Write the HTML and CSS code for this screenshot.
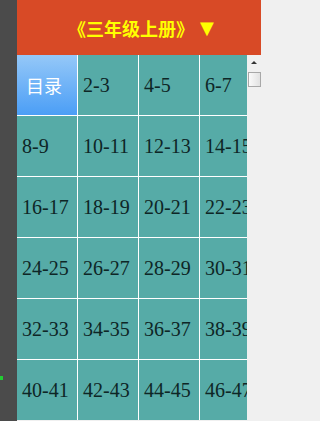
FILE: index.html
```html
<!DOCTYPE html>
<html>
<head>
<meta charset="utf-8">
<link rel="stylesheet" href="styles.css">
</head>
<body>
<div class="app">
  <div class="side"><span class="dot"></span></div>
  <div class="main">
    <div class="header"><span class="title">《三年级上册》</span><span class="arrow">▼</span></div>
    <div class="body">
      <div class="viewport">
        <div class="grid">
          <div class="cell toc">目录</div><div class="cell">2-3</div><div class="cell">4-5</div><div class="cell">6-7</div>
          <div class="cell">8-9</div><div class="cell">10-11</div><div class="cell">12-13</div><div class="cell">14-15</div>
          <div class="cell">16-17</div><div class="cell">18-19</div><div class="cell">20-21</div><div class="cell">22-23</div>
          <div class="cell">24-25</div><div class="cell">26-27</div><div class="cell">28-29</div><div class="cell">30-31</div>
          <div class="cell">32-33</div><div class="cell">34-35</div><div class="cell">36-37</div><div class="cell">38-39</div>
          <div class="cell">40-41</div><div class="cell">42-43</div><div class="cell">44-45</div><div class="cell">46-47</div>
        </div>
      </div>
      <div class="scrollbar">
        <div class="up"></div>
        <div class="thumb"></div>
      </div>
    </div>
  </div>
</div>
</body>
</html>
```
FILE: styles.css
```css
html, body {
  margin: 0;
  padding: 0;
  width: 261px;
  height: 421px;
  overflow: hidden;
  background: #f0f0f0;
}
.app {
  display: flex;
  width: 261px;
  height: 421px;
}
.side {
  width: 17px;
  flex: none;
  background: #4b4b4b;
  display: flex;
  flex-direction: column;
  justify-content: flex-end;
}
.dot {
  width: 3px;
  height: 4px;
  margin-bottom: 41px;
  background: #22cc33;
}
.main {
  flex: 1;
  display: flex;
  flex-direction: column;
  min-width: 0;
}
.header {
  height: 55px;
  flex: none;
  background: #d84a26;
  display: flex;
  align-items: center;
  justify-content: center;
  padding-left: 4px;
  color: #ffff00;
  font-family: "Noto Sans CJK SC", "Noto Sans", sans-serif;
  font-weight: bold;
  font-size: 18px;
  box-sizing: border-box;
}
.arrow {
  font-size: 18px;
  margin-left: 6px;
  font-family: "DejaVu Sans", sans-serif;
}
.body {
  flex: 1;
  display: flex;
  min-height: 0;
}
.viewport {
  width: 230px;
  flex: none;
  overflow: hidden;
}
.grid {
  display: grid;
  grid-template-columns: repeat(4, 60px);
  grid-auto-rows: 60px;
  gap: 1px;
  background: #ffffff;
  width: 243px;
}
.cell {
  background: #56aba7;
  color: #0e2626;
  font-family: "Liberation Serif", serif;
  font-size: 20px;
  display: flex;
  align-items: center;
  padding-left: 5px;
  white-space: nowrap;
  overflow: hidden;
}
.cell.toc {
  background: linear-gradient(#95c8f8, #4b9ef6);
  color: #ffffff;
  font-family: "Noto Sans CJK SC", sans-serif;
  font-size: 18px;
  padding-left: 9px;
}
.scrollbar {
  flex: 1;
  background: #f0f0f0;
  display: flex;
  flex-direction: column;
  align-items: center;
}
.up {
  width: 0;
  height: 0;
  margin-top: 6px;
  border-left: 3px solid transparent;
  border-right: 3px solid transparent;
  border-bottom: 3px solid #333333;
}
.thumb {
  margin-top: 8px;
  width: 11px;
  height: 13px;
  border: 1px solid #a8a8a8;
  background: linear-gradient(90deg, #fafafa, #e2e2e2);
}
```
